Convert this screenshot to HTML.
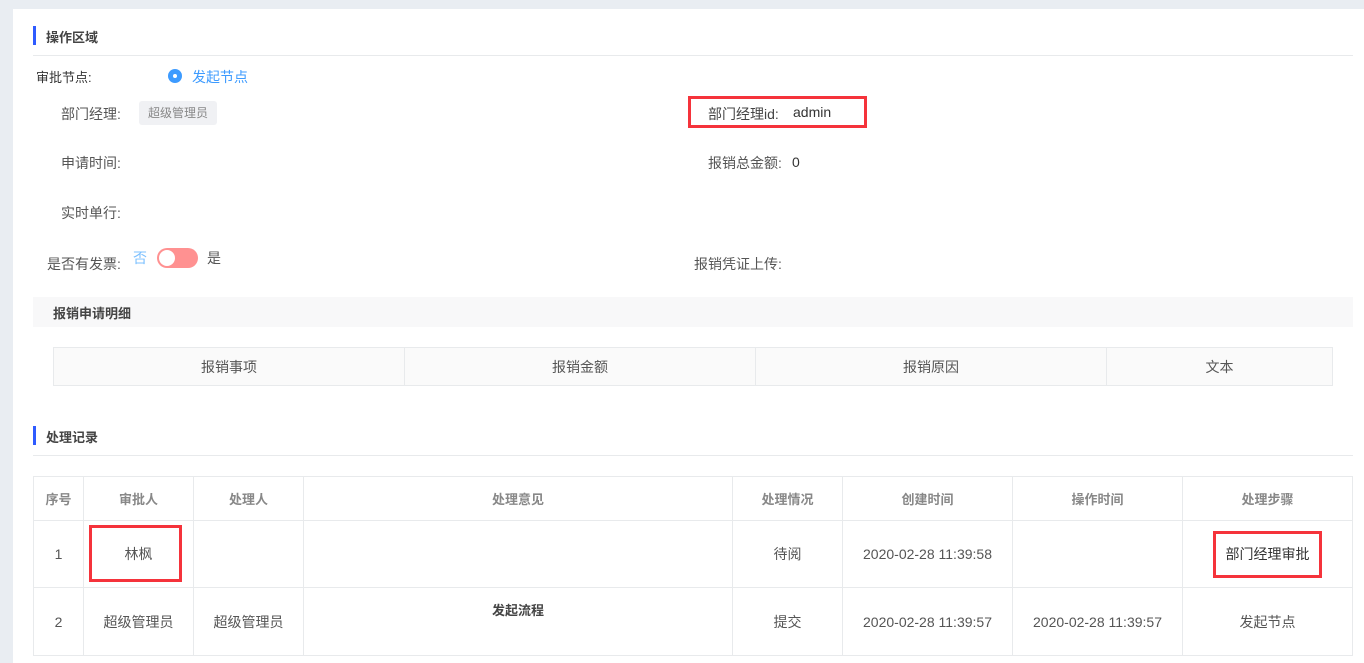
<!DOCTYPE html>
<html><head><meta charset="utf-8"><style>
*{margin:0;padding:0;box-sizing:border-box}
body{width:1364px;height:663px;background:#e9edf2;font-family:"Liberation Sans","Noto Sans CJK SC",sans-serif;font-size:14px;color:#555;position:relative;overflow:hidden}
.panel{position:absolute;left:13px;top:9px;width:1351px;height:654px;background:#fff}
.a{position:absolute;white-space:nowrap}
.bar{position:absolute;width:3px;height:19px;background:#2f5bff}
.ttl{font-weight:bold;color:#444;font-size:13px}
.hr{position:absolute;height:1px;background:#e8eaec}
table{position:absolute;border-collapse:collapse}
td{border:1px solid #e8eaec;text-align:center;color:#555}
.red{position:absolute;border:3px solid #f5333b}
</style></head><body>
<div class="panel"></div>
<div class="bar" style="left:33px;top:26px"></div>
<div class="a ttl" style="left:46px;top:27px">操作区域</div>
<div class="hr" style="left:33px;top:55px;width:1320px"></div>
<div class="a" style="left:36px;top:67px;color:#333;font-size:13px">审批节点:</div>
<div class="a" style="left:168px;top:69px;width:14px;height:14px;border-radius:50%;background:#3d9bff"><div style="position:absolute;left:5px;top:5px;width:4px;height:4px;border-radius:50%;background:#fff"></div></div>
<div class="a" style="left:192px;top:67px;color:#3d9bff">发起节点</div>
<div class="a" style="left:61px;top:104px">部门经理:</div>
<div class="a" style="left:139px;top:101px;width:78px;height:24px;background:#f0f1f4;border-radius:3px;font-size:12px;color:#888;text-align:center;line-height:24px">超级管理员</div>
<div class="a" style="left:708px;top:104px;color:#444">部门经理id:</div>
<div class="a" style="left:793px;top:104px;color:#333;font-size:14px">admin</div>
<div class="red" style="left:688px;top:96px;width:179px;height:32px"></div>
<div class="a" style="left:61px;top:153px">申请时间:</div>
<div class="a" style="left:708px;top:153px">报销总金额:</div>
<div class="a" style="left:792px;top:154px;color:#333;font-size:14px">0</div>
<div class="a" style="left:61px;top:203px">实时单行:</div>
<div class="a" style="left:47px;top:254px">是否有发票:</div>
<div class="a" style="left:133px;top:248px;color:#7cc0ff">否</div>
<div class="a" style="left:157px;top:248px;width:41px;height:20px;border-radius:10px;background:#ff9191"><div style="position:absolute;left:2px;top:2px;width:16px;height:16px;border-radius:50%;background:#fff"></div></div>
<div class="a" style="left:207px;top:248px">是</div>
<div class="a" style="left:694px;top:254px">报销凭证上传:</div>
<div class="a" style="left:33px;top:297px;width:1320px;height:30px;background:#f8f8f9"></div>
<div class="a ttl" style="left:53px;top:303px">报销申请明细</div>
<table style="left:53px;top:347px;width:1280px;height:39px"><tr style="background:#fafafa">
<td style="width:351px">报销事项</td><td style="width:351px">报销金额</td><td style="width:351px">报销原因</td><td>文本</td></tr></table>
<div class="bar" style="left:33px;top:426px"></div>
<div class="a ttl" style="left:46px;top:427px">处理记录</div>
<div class="hr" style="left:33px;top:455px;width:1320px"></div>
<table style="left:33px;top:476px;width:1320px">
<tr style="height:44px;font-weight:bold;font-size:13px"><td style="width:50px;color:#888">序号</td><td style="width:110px;color:#888">审批人</td><td style="width:110px;color:#888">处理人</td><td style="width:429px;color:#888">处理意见</td><td style="width:110px;color:#888">处理情况</td><td style="width:170px;color:#888">创建时间</td><td style="width:170px;color:#888">操作时间</td><td style="color:#888">处理步骤</td></tr>
<tr style="height:67px"><td>1</td><td>林枫</td><td></td><td></td><td>待阅</td><td>2020-02-28 11:39:58</td><td></td><td style="color:#333">部门经理审批</td></tr>
<tr style="height:68px"><td>2</td><td>超级管理员</td><td>超级管理员</td><td style="vertical-align:top;padding-top:12px;font-weight:bold;color:#444;font-size:13px">发起流程</td><td>提交</td><td>2020-02-28 11:39:57</td><td>2020-02-28 11:39:57</td><td>发起节点</td></tr>
</table>
<div class="red" style="left:89px;top:525px;width:93px;height:57px"></div>
<div class="red" style="left:1213px;top:531px;width:109px;height:47px"></div>
</body></html>
